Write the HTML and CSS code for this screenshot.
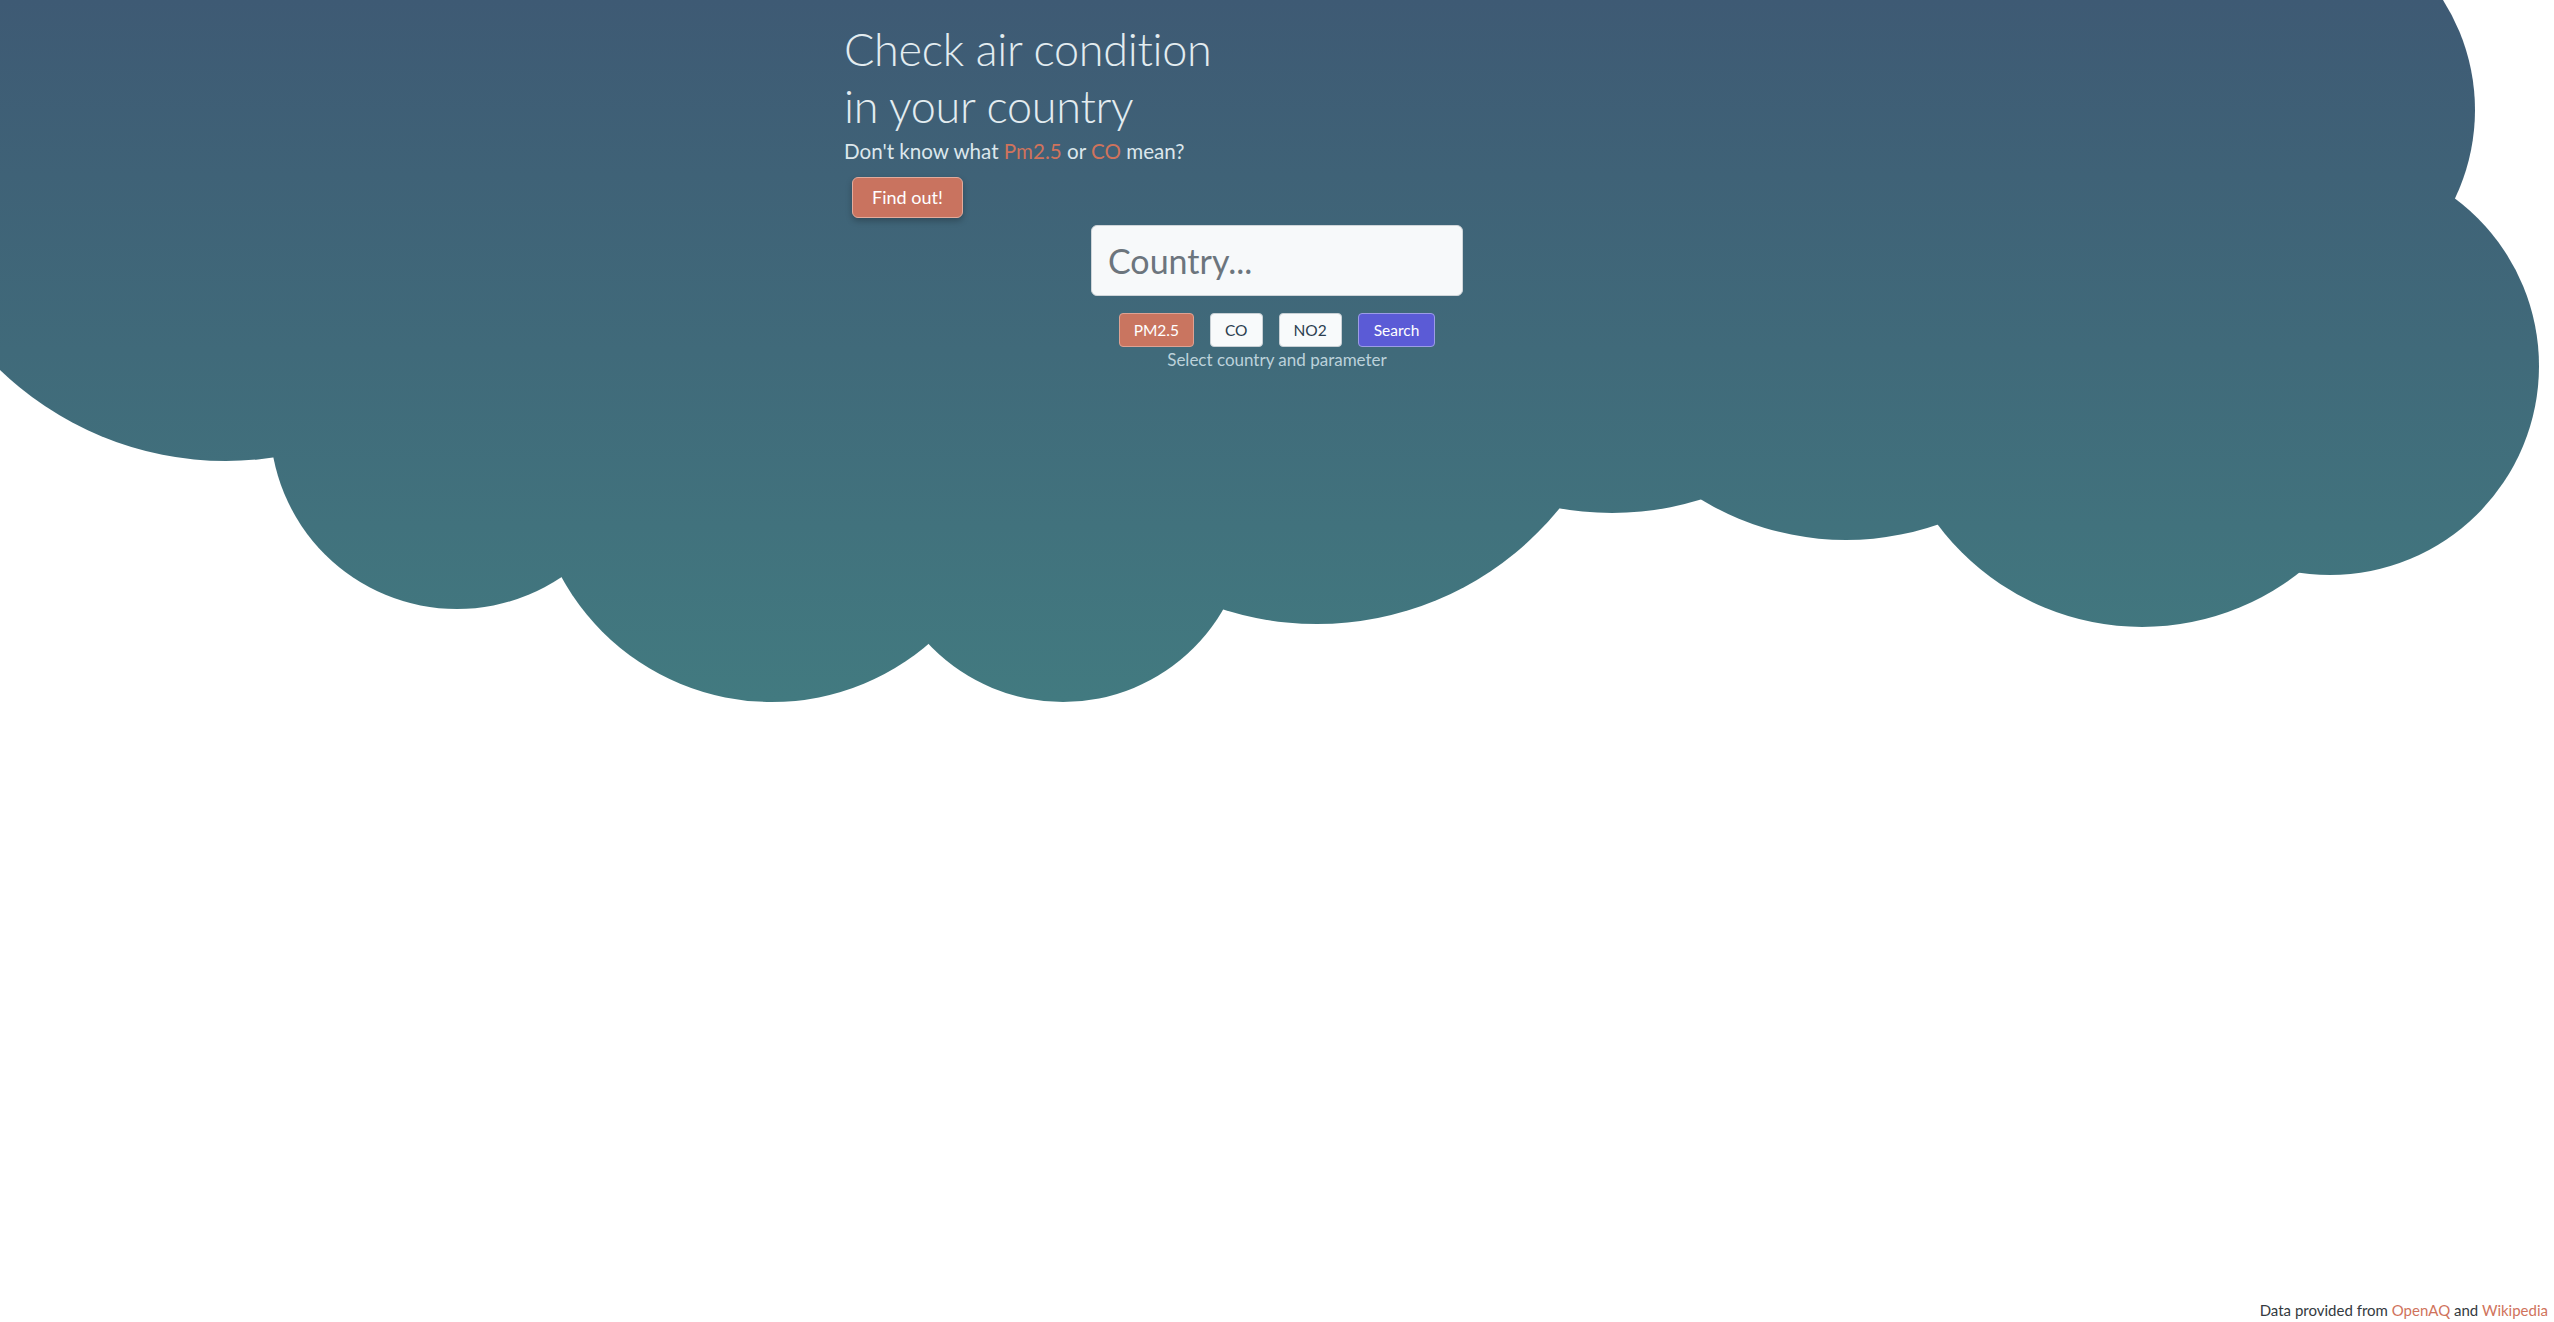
FILE: index.html
```html
<!DOCTYPE html>
<html lang="en">
<head>
<meta charset="utf-8">
<title>Check air condition</title>
<link rel="stylesheet" href="styles.css">
</head>
<body>
<svg class="cloud" width="2554" height="710" viewBox="0 0 2554 710" aria-hidden="true">
  <defs>
    <linearGradient id="sky" gradientUnits="userSpaceOnUse" x1="0" y1="0" x2="0" y2="701">
      <stop offset="0" stop-color="#3e5a74"/>
      <stop offset="1" stop-color="#427a80"/>
    </linearGradient>
  </defs>
  <g fill="url(#sky)">
    <polygon points="0,0 2270,0 2270,110 2330,366 2142,372 1846,260 1612,213 1317,312 1063,517 772,462 457,422 226,135 0,370"/>
    <circle cx="226" cy="135" r="326"/>
    <circle cx="457" cy="422" r="187"/>
    <circle cx="772" cy="462" r="240"/>
    <circle cx="1063" cy="517" r="185"/>
    <circle cx="1317" cy="312" r="312"/>
    <circle cx="1612" cy="213" r="300"/>
    <circle cx="1846" cy="260" r="280"/>
    <circle cx="2142" cy="372" r="255"/>
    <circle cx="2330" cy="366" r="209"/>
    <circle cx="2270" cy="110" r="205"/>
  </g>
</svg>
<main class="page">
  <section class="intro">
    <h1 class="title">Check air condition<br>in your country</h1>
    <p class="lead">Don't know what <a class="accent" href="#pm">Pm2.5</a> or <a class="accent" href="#co">CO</a> mean?</p>
    <button class="btn btn-find" type="button">Find out!</button>
  </section>
  <section class="search">
    <input class="country" type="text" placeholder="Country...">
    <div class="params">
      <button class="btn btn-param btn-active" type="button">PM2.5</button>
      <button class="btn btn-param" type="button">CO</button>
      <button class="btn btn-param" type="button">NO2</button>
      <button class="btn btn-search" type="button">Search</button>
    </div>
    <p class="hint">Select country and parameter</p>
  </section>
  <footer class="credits">Data provided from <a class="accent" href="#openaq">OpenAQ</a> and <a class="accent" href="#wiki">Wikipedia</a></footer>
</main>
</body>
</html>
```
FILE: styles.css
```css
html, body {
  margin: 0;
  padding: 0;
}

body {
  background: #ffffff;
  font-family: "Lato", "Liberation Sans", sans-serif;
  color: #343a40;
  overflow: hidden;
}

.cloud {
  position: absolute;
  top: 0;
  left: 0;
  display: block;
  z-index: 0;
}

.page {
  position: relative;
  z-index: 1;
  min-height: 100vh;
  display: flex;
  flex-direction: column;
}

.intro {
  width: 866px;
  margin: 0 auto;
  padding-top: 21px;
  display: flex;
  flex-direction: column;
  align-items: flex-start;
}

.title {
  margin: 0;
  font-weight: 300;
  font-size: 45px;
  line-height: 57px;
  color: #e3ecf0;
  letter-spacing: -0.3px;
}

.lead {
  margin: 4px 0 0;
  font-size: 20.6px;
  line-height: 25px;
  color: #dce7ec;
}

.accent {
  color: #d0735c;
  text-decoration: none;
}

.btn {
  font-family: inherit;
  cursor: pointer;
  border-radius: 4px;
}

.btn-find {
  margin: 13px 0 0 8px;
  padding: 6px 19px;
  font-size: 18px;
  line-height: 27px;
  color: #ffffff;
  background: #c9735f;
  border: 1px solid #e2ab9c;
  border-radius: 6px;
  box-shadow: 0 3px 6px rgba(0, 0, 0, 0.25);
}

.search {
  margin-top: 7px;
  display: flex;
  flex-direction: column;
  align-items: center;
}

.country {
  box-sizing: border-box;
  width: 372px;
  height: 71px;
  padding: 0 16px;
  font-family: inherit;
  font-size: 34px;
  color: #495057;
  background: #f7f9fa;
  border: 1px solid #cfd5d9;
  border-radius: 6px;
  outline: none;
}

.country::placeholder {
  color: #6c757d;
}

.params {
  margin-top: 17px;
  display: flex;
  gap: 16px;
}

.btn-param,
.btn-search {
  padding: 4px 14px;
  font-size: 15.5px;
  line-height: 24px;
  color: #2c3e50;
  background: #f8fafb;
  border: 1px solid #c8d0d5;
}

.btn-active {
  color: #ffffff;
  background: #c97560;
  border-color: #dea293;
}

.btn-search {
  padding: 4px 15px;
  color: #ffffff;
  background: #5b5bd6;
  border-color: #9c9ce6;
}

.hint {
  margin: 3px 0 0;
  font-size: 17px;
  line-height: 20px;
  color: #bcd2db;
}

.credits {
  margin-top: auto;
  align-self: flex-end;
  padding: 0 6px 0 0;
  font-size: 15px;
  line-height: 24px;
  color: #343a40;
}
```
